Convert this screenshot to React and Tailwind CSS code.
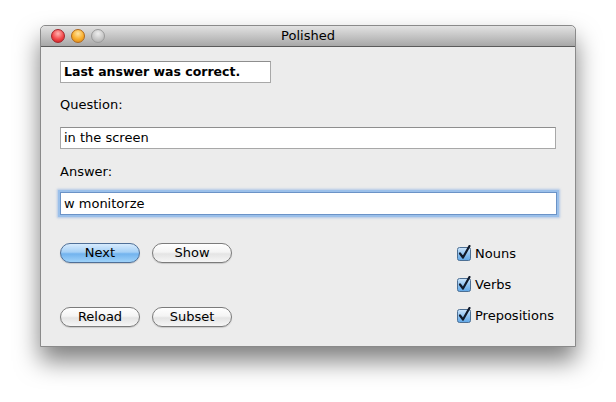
import React from "react";

function Check({ label }) {
  return (
    <div className="flex items-center h-[16px]">
      <svg width="16" height="16" viewBox="0 0 16 16" className="mr-[3px]">
        <defs>
          <linearGradient id="cbg" x1="0" y1="0" x2="0" y2="1">
            <stop offset="0" stopColor="#cfe6fb" />
            <stop offset="0.5" stopColor="#8fc3f1" />
            <stop offset="1" stopColor="#5fa6e6" />
          </linearGradient>
        </defs>
        <rect x="1.5" y="2.5" width="13" height="13" rx="2" fill="url(#cbg)" stroke="#4d6f93" />
        <path d="M4 8.5 L7 12.5 L13.5 1" fill="none" stroke="#111a2a" strokeWidth="2.2" strokeLinecap="round" strokeLinejoin="round" />
      </svg>
      <span className="text-[13px] leading-none text-black">{label}</span>
    </div>
  );
}

function Btn({ children, primary }) {
  return (
    <div
      className={
        "w-[80px] h-[20px] rounded-full border flex items-center justify-center text-[13px] text-black shadow-[0_1px_1px_rgba(0,0,0,0.15)] " +
        (primary
          ? "border-[#4f6f97] bg-[linear-gradient(to_bottom,#d7ebfd_0%,#a5d0f6_45%,#72b3ee_55%,#9fd2f9_100%)]"
          : "border-[#7b7b7b] bg-[linear-gradient(to_bottom,#ffffff_0%,#f4f4f4_45%,#e4e4e4_55%,#f6f6f6_100%)]")
      }
    >
      {children}
    </div>
  );
}

export default function App() {
  return (
    <div className="w-[616px] h-[402px] bg-white pl-[40px] pt-[25px] font-['DejaVu_Sans',sans-serif]">
      <div className="w-[536px] h-[322px] bg-[#ececec] rounded-t-[5px] border border-[#8a8a8a] shadow-[0_14px_24px_rgba(0,0,0,0.5)] flex flex-col">
        <div className="h-[21px] relative flex items-center rounded-t-[5px] border-b border-[#5a5a5a] bg-[linear-gradient(to_bottom,#e2e2e2,#c2c2c2_55%,#a7a7a7)]">
          <div className="flex items-center gap-[6px] pl-[10px]">
            <span className="w-[14px] h-[14px] rounded-full border border-[#a3252b] bg-[radial-gradient(circle_at_50%_30%,#ffb3b0,#f2474a_55%,#c4161c)]" />
            <span className="w-[14px] h-[14px] rounded-full border border-[#b0681b] bg-[radial-gradient(circle_at_50%_30%,#ffe4a0,#f8ae2c_55%,#d6801a)]" />
            <span className="w-[14px] h-[14px] rounded-full border border-[#9a9a9a] bg-[radial-gradient(circle_at_50%_30%,#eeeeee,#c8c8c8_55%,#a8a8a8)]" />
          </div>
          <div className="absolute inset-0 flex items-center justify-center text-[13px] text-black">Polished</div>
        </div>
        <div className="px-[19px] flex flex-col">
          <div className="mt-[14px] w-[211px] h-[22px] bg-white border border-[#a8a8a8] border-t-[#8e8e8e] flex items-center pl-[3px] text-[12.5px] font-bold text-black">
            Last answer was correct.
          </div>
          <div className="mt-[14px] h-[16px] flex items-center text-[13px] text-black">Question:</div>
          <div className="mt-[14px] w-[496px] h-[22px] bg-white border border-[#a8a8a8] border-t-[#8e8e8e] flex items-center pl-[3px] text-[13px] text-black">
            in the screen
          </div>
          <div className="mt-[15px] h-[16px] flex items-center text-[13px] text-black">Answer:</div>
          <div className="mt-[12px] w-[497px] h-[23px] bg-white border border-[#6b93c7] shadow-[0_0_0_2px_#9bc0ea,0_0_2px_3px_rgba(120,165,225,0.5)] flex items-center pl-[3px] text-[13px] text-black">
            w monitorze
          </div>
          <div className="mt-[28px] flex justify-between">
            <div className="flex flex-col gap-[44px]">
              <div className="flex gap-[12px]">
                <Btn primary>Next</Btn>
                <Btn>Show</Btn>
              </div>
              <div className="flex gap-[12px]">
                <Btn>Reload</Btn>
                <Btn>Subset</Btn>
              </div>
            </div>
            <div className="flex flex-col gap-[15px] pt-[2px] w-[100px]">
              <Check label="Nouns" />
              <Check label="Verbs" />
              <Check label="Prepositions" />
            </div>
          </div>
        </div>
      </div>
    </div>
  );
}
